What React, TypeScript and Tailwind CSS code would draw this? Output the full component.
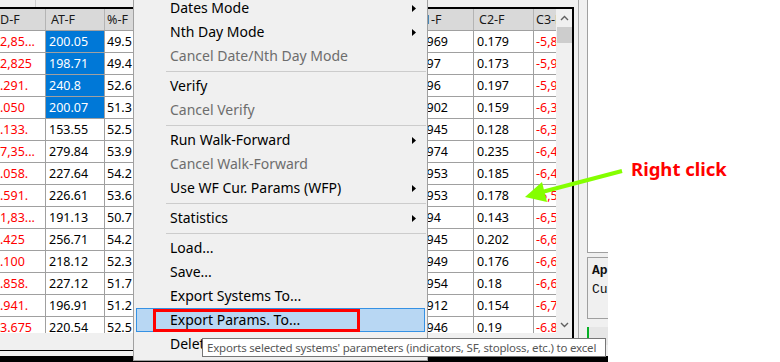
import React from "react";

const LEFT: [string, string, string][] = [
  ["2,85...", "200.05", "49.5"],
  ["2,825", "198.71", "49.4"],
  [".291.", "240.8", "52.6"],
  [".050", "200.07", "51.3"],
  [".133.", "153.55", "52.5"],
  ["7,35...", "279.84", "53.9"],
  [".058.", "227.64", "54.2"],
  [".591.", "226.61", "53.6"],
  ["1,83...", "191.13", "50.7"],
  [".425", "256.71", "54.2"],
  [".100", "218.12", "52.3"],
  [".858.", "227.12", "51.7"],
  [".941.", "196.91", "51.2"],
  ["3.675", "220.54", "52.5"],
];

const RIGHT: [string, string, string][] = [
  ["0.969", "0.179", "-5,812."],
  ["0.97", "0.173", "-5,934."],
  ["0.96", "0.197", "-5,951."],
  ["0.902", "0.159", "-6,310."],
  ["0.945", "0.128", "-6,322."],
  ["0.974", "0.235", "-6,411."],
  ["0.953", "0.185", "-6,437."],
  ["0.953", "0.178", "-6,512."],
  ["0.94", "0.143", "-6,540."],
  ["0.945", "0.202", "-6,611."],
  ["0.949", "0.176", "-6,630."],
  ["0.954", "0.18", "-6,655."],
  ["0.912", "0.154", "-6,712."],
  ["0.946", "0.19", "-6.813"],
];

type MenuEntry =
  | { sep: true }
  | { sep?: false; label: string; disabled?: boolean; sub?: boolean; hl?: boolean };

const MENU: MenuEntry[] = [
  { label: "Dates Mode", sub: true },
  { label: "Nth Day Mode", sub: true },
  { label: "Cancel Date/Nth Day Mode", disabled: true },
  { sep: true },
  { label: "Verify" },
  { label: "Cancel Verify", disabled: true },
  { sep: true },
  { label: "Run Walk-Forward", sub: true },
  { label: "Cancel Walk-Forward", disabled: true },
  { label: "Use WF Cur. Params (WFP)", sub: true },
  { sep: true },
  { label: "Statistics", sub: true },
  { sep: true },
  { label: "Load..." },
  { label: "Save..." },
  { label: "Export Systems To..." },
  { label: "Export Params. To...", hl: true },
  { label: "Delete" },
];

function Chevron({ up }: { up: boolean }) {
  return (
    <svg width="9" height="6" viewBox="0 0 9 6">
      <polyline
        points={up ? "1,5 4.5,1.5 8,5" : "1,1 4.5,4.5 8,1"}
        fill="none"
        stroke="#606060"
        strokeWidth="1.4"
      />
    </svg>
  );
}

function Tri() {
  return (
    <svg width="4" height="7" viewBox="0 0 4 7">
      <polygon points="0,0 4,3.5 0,7" fill="#000" />
    </svg>
  );
}

function HeaderRow() {
  return (
    <div className="flex h-[22px] bg-[#d9d9d9] border-b border-[#a0a0a0] text-[#1a1a1a]">
      <div className="w-[46px] shrink-0 border-r border-[#b4b4b4] leading-[21px] whitespace-nowrap overflow-hidden">D-F</div>
      <div className="w-[59px] shrink-0 border-r border-[#b4b4b4] pl-[5px] leading-[21px] whitespace-nowrap overflow-hidden">AT-F</div>
      <div className="w-[60px] shrink-0 border-r border-[#b4b4b4] pl-[2px] leading-[21px] whitespace-nowrap overflow-hidden">%-F</div>
      <div className="w-[248px] shrink-0 border-r border-[#b4b4b4]" />
      <div className="w-[61px] shrink-0 border-r border-[#b4b4b4] pl-[3px] leading-[21px] whitespace-nowrap overflow-hidden">C1-F</div>
      <div className="w-[60px] shrink-0 border-r border-[#b4b4b4] pl-[5px] leading-[21px] whitespace-nowrap overflow-hidden">C2-F</div>
      <div className="w-[22px] shrink-0 pl-[2px] leading-[21px] whitespace-nowrap overflow-hidden">C3-F</div>
    </div>
  );
}

function DataRow({ i }: { i: number }) {
  const [d, at, pct] = LEFT[i];
  const [c1, c2, c3] = RIGHT[i];
  const sel = i < 4;
  return (
    <div className="flex h-[22px] shrink-0 border-b border-[#a0a0a0] bg-white">
      <div className="w-[46px] shrink-0 border-r border-[#a0a0a0] leading-[21px] whitespace-nowrap overflow-hidden text-[#ff0000]">{d}</div>
      <div
        className={
          "w-[59px] shrink-0 border-r border-[#a0a0a0] pl-[3px] leading-[21px] whitespace-nowrap overflow-hidden " +
          (sel ? "bg-[#0078d7] text-white" : "text-black")
        }
      >
        {at}
      </div>
      <div className="w-[60px] shrink-0 border-r border-[#a0a0a0] pl-[2px] leading-[21px] whitespace-nowrap overflow-hidden text-black">{pct}</div>
      <div className="w-[248px] shrink-0 border-r border-[#a0a0a0]" />
      <div className="w-[61px] shrink-0 border-r border-[#a0a0a0] pl-[3px] leading-[21px] whitespace-nowrap overflow-hidden text-black">{c1}</div>
      <div className="w-[60px] shrink-0 border-r border-[#a0a0a0] pl-[3px] leading-[21px] whitespace-nowrap overflow-hidden text-black">{c2}</div>
      <div className="w-[22px] shrink-0 pl-[2px] leading-[21px] whitespace-nowrap overflow-hidden text-[#ff0000]">{c3}</div>
    </div>
  );
}

function Table() {
  return (
    <div className="h-[344px] border-t-2 border-r-2 border-b border-black flex flex-col bg-[#f0f0f0] font-['Noto_Sans',sans-serif] text-[12.5px]">
      <div className="flex h-[324px]">
        <div className="w-[556px] flex flex-col overflow-hidden">
          <HeaderRow />
          <div className="h-[302px] overflow-hidden flex flex-col">
            {LEFT.map((_, i) => (
              <DataRow key={i} i={i} />
            ))}
          </div>
        </div>
        <div className="w-[16px] flex flex-col items-center bg-[#f0f0f0]">
          <div className="h-[17px] flex items-center justify-center">
            <Chevron up />
          </div>
          <div className="h-[1px]" />
          <div className="w-[15px] h-[16px] bg-[#cdcdcd]" />
          <div className="flex-1" />
          <div className="h-[17px] flex items-center justify-center">
            <Chevron up={false} />
          </div>
        </div>
      </div>
      <div className="h-[17px] bg-[#f0f0f0]" />
    </div>
  );
}

function Sidebar() {
  return (
    <div className="w-[34px] h-[362px] flex flex-col">
      <div className="flex-1 flex bg-[#f0f0f0]">
        <div className="w-[4px]" />
        <div className="w-px bg-[#a8a8a8]" />
        <div className="w-[8px]" />
        <div className="w-[21px] flex flex-col">
          <div className="h-[253px] bg-white border-l border-b border-[#a0a0a0]" />
          <div className="h-[4px]" />
          <div className="h-[62px] border-l border-t border-b border-[#a0a0a0] pl-[4px] pt-[3px] font-['Liberation_Mono',monospace] text-[13px] leading-[19px] text-[#111] whitespace-nowrap overflow-hidden">
            <div className="font-bold">Ap</div>
            <div>Cu</div>
          </div>
          <div className="h-[8px]" />
          <div className="h-[18px] bg-[#e6e6e6] border-l-2 border-[#06b025]" />
          <div className="flex-1" />
        </div>
      </div>
      <div className="h-[6px] bg-black" />
    </div>
  );
}

function ContextMenu() {
  return (
    <div className="absolute left-[133px] top-[-5px] w-[295px] h-[366px] border border-[#a0a0a0] bg-[#f0f0f0] font-['Noto_Sans',sans-serif] text-[14px]">
      {MENU.map((m, i) =>
        m.sep ? (
          <div key={i} className="h-[6px] flex items-center pl-[32px] pr-[1px]">
            <div className="h-px w-full bg-[#cccccc]" />
          </div>
        ) : (
          <div
            key={i}
            className={
              "mx-[2px] h-[24px] border flex items-center pl-[33px] pr-[8px] " +
              (m.hl ? "bg-[#b8d7f3] border-[#3591e4]" : "border-transparent")
            }
          >
            <span className={"flex-1 leading-[22px] whitespace-nowrap " + (m.disabled ? "text-[#6d6d6d]" : "text-black")}>
              {m.label}
            </span>
            {m.sub ? <Tri /> : null}
          </div>
        )
      )}
    </div>
  );
}

export default function App() {
  return (
    <div className="relative w-[780px] h-[362px] overflow-hidden bg-white flex">
      <div className="w-[608px] flex">
        <div className="w-[574px] flex flex-col">
          <div className="h-[7px] flex bg-[#f0f0f0]">
            <div className="w-[35px]" />
            <div className="w-px bg-[#cfcfcf]" />
            <div className="flex-1" />
          </div>
          <Table />
          <div className="h-[5px] bg-[#f0f0f0]" />
          <div className="h-[6px] bg-black" />
        </div>
        <Sidebar />
      </div>
      <div className="flex-1 bg-white" />

      <ContextMenu />

      <div className="absolute left-[153px] top-[309px] w-[207px] h-[23px] border-[3px] border-[#ff0000]" />

      <div className="absolute left-[202px] top-[338px] w-[404px] h-[19px] border border-[#767676] bg-white pl-[4px] font-['Noto_Sans',sans-serif] text-[11.5px] tracking-[-0.2px] leading-[17px] text-[#575757] whitespace-nowrap overflow-hidden">
        Exports selected systems' parameters (indicators, SF, stoploss, etc.) to excel
      </div>

      <svg className="absolute left-0 top-0 pointer-events-none" width="780" height="362" viewBox="0 0 780 362">
        <line x1="622" y1="171" x2="542" y2="192" stroke="#84ff00" strokeWidth="4" />
        <polygon points="525,197 542,182 547,202" fill="#84ff00" />
      </svg>

      <div className="absolute left-[631px] top-[160px] font-['Noto_Sans',sans-serif] font-bold text-[18.5px] leading-none text-[#ff0000] whitespace-nowrap">
        Right click
      </div>
    </div>
  );
}
